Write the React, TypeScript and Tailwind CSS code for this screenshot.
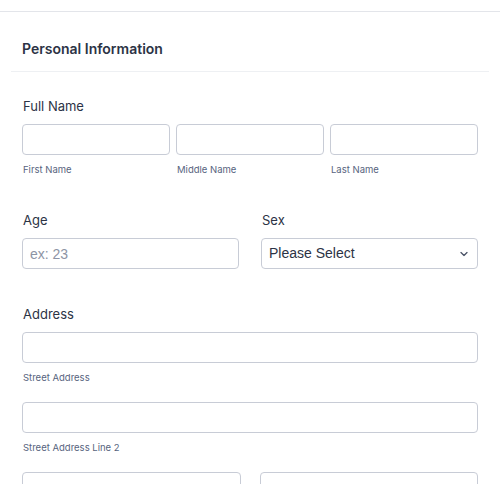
import React from "react";

const inputCls =
  "block w-full h-[31px] rounded-[4px] border border-[#c8ccd6] bg-white px-[7px] text-[14px] text-[#2c3345] outline-none";

const fieldFont = { fontFamily: "'Liberation Sans', Arial, sans-serif" };

function SubLabel({ children }: { children: React.ReactNode }) {
  return <div className="mt-[9px] pl-[1px] text-[9.5px] leading-[12px] text-[#57647e]">{children}</div>;
}

function Label({ children }: { children: React.ReactNode }) {
  return <div className="pl-[1px] text-[13px] leading-[18px] font-normal text-[#2c3345]">{children}</div>;
}

export default function App() {
  return (
    <div className="w-[500px] h-[484px] overflow-hidden bg-white" style={{ fontFamily: "Inter, 'Noto Sans', sans-serif" }}>
      <div className="h-[12px] border-b border-[#e3e5ea]" />
      <div className="px-[11px]">
        <div className="border-b border-[#eef0f3] pl-[11px] pt-[27px] pb-[13px]">
          <h2 className="text-[14px] leading-[19px] font-semibold text-[#2c3345]">Personal Information</h2>
        </div>
      </div>

      <div className="pl-[22px] pr-[22px]">
        {/* Full name */}
        <div className="pt-[25px]">
          <Label>Full Name</Label>
          <div className="mt-[9px] grid grid-cols-3 gap-x-[6px]">
            <div>
              <input className={inputCls} style={fieldFont} />
              <SubLabel>First Name</SubLabel>
            </div>
            <div>
              <input className={inputCls} style={fieldFont} />
              <SubLabel>Middle Name</SubLabel>
            </div>
            <div>
              <input className={inputCls} style={fieldFont} />
              <SubLabel>Last Name</SubLabel>
            </div>
          </div>
        </div>

        {/* Age / Sex */}
        <div className="mt-[35px] grid grid-cols-2 gap-x-[22px]">
          <div>
            <Label>Age</Label>
            <input
              className={inputCls + " mt-[9px] placeholder:text-[#8d94a5]"}
              style={fieldFont}
              placeholder="ex: 23"
            />
          </div>
          <div>
            <Label>Sex</Label>
            <div className="relative mt-[9px]">
              <div className={inputCls + " flex items-center"} style={fieldFont}>
                Please Select
              </div>
              <svg
                className="absolute right-[10px] top-1/2 -translate-y-1/2"
                width="8"
                height="5"
                viewBox="0 0 8 5"
                fill="none"
              >
                <path d="M1 1 4 4 7 1" stroke="#4b5468" strokeWidth="1.3" strokeLinecap="round" strokeLinejoin="round" />
              </svg>
            </div>
          </div>
        </div>

        {/* Address */}
        <div className="mt-[36px]">
          <Label>Address</Label>
          <input className={inputCls + " mt-[9px]"} style={fieldFont} />
          <SubLabel>Street Address</SubLabel>
          <input className={inputCls + " mt-[18px]"} style={fieldFont} />
          <SubLabel>Street Address Line 2</SubLabel>
          <div className="mt-[18px] grid grid-cols-2 gap-x-[19px]">
            <input className={inputCls} style={fieldFont} />
            <input className={inputCls} style={fieldFont} />
          </div>
        </div>
      </div>
    </div>
  );
}
